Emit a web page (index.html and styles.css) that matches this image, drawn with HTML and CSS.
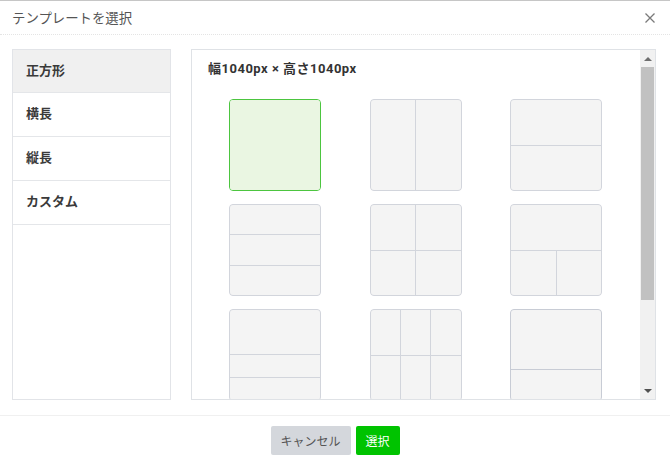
FILE: index.html
```html
<!DOCTYPE html>
<html lang="ja">
<head>
<meta charset="utf-8">
<title>テンプレートを選択</title>
<link rel="stylesheet" href="styles.css">
</head>
<body>
<div class="modal">
  <div class="header">
    <span class="title">テンプレートを選択</span>
    <svg class="close" width="10" height="10" viewBox="0 0 10 10"><path d="M0.5 0.5 L9.5 9.5 M9.5 0.5 L0.5 9.5" stroke="#7a7a7a" stroke-width="1.3" fill="none"/></svg>
  </div>
  <div class="body">
    <ul class="sidebar">
      <li class="item active">正方形</li>
      <li class="item">横長</li>
      <li class="item">縦長</li>
      <li class="item">カスタム</li>
    </ul>
    <div class="panel">
      <div class="content">
        <div class="heading">幅1040px × 高さ1040px</div>
        <div class="grid">
          <div class="tile selected"><div class="cell"></div></div>
          <div class="tile t-2col"><div class="cell"></div><div class="cell"></div></div>
          <div class="tile t-2row"><div class="cell"></div><div class="cell"></div></div>
          <div class="tile t-3row"><div class="cell"></div><div class="cell"></div><div class="cell"></div></div>
          <div class="tile t-2x2"><div class="cell"></div><div class="cell"></div><div class="cell"></div><div class="cell"></div></div>
          <div class="tile t-1-2"><div class="cell span2"></div><div class="cell"></div><div class="cell"></div></div>
          <div class="tile t-211"><div class="cell"></div><div class="cell"></div><div class="cell"></div></div>
          <div class="tile t-3x2"><div class="cell"></div><div class="cell"></div><div class="cell"></div><div class="cell"></div><div class="cell"></div><div class="cell"></div></div>
          <div class="tile t-21 dark"><div class="cell"></div><div class="cell"></div></div>
        </div>
      </div>
      <div class="scrollbar">
        <div class="sb-btn"><span class="arrow up"></span></div>
        <div class="sb-thumb"></div>
        <div class="sb-track"></div>
        <div class="sb-btn"><span class="arrow down"></span></div>
      </div>
    </div>
  </div>
  <div class="footer">
    <button class="btn cancel">キャンセル</button>
    <button class="btn ok">選択</button>
  </div>
</div>
</body>
</html>
```

FILE: styles.css
```css
* { box-sizing: border-box; }
html, body { margin: 0; padding: 0; background: #fff; }
body {
  font-family: Roboto, "Noto Sans CJK JP", sans-serif;
  color: #333;
}
.modal {
  width: 670px;
  height: 462px;
  border-top: 1px solid #c6c6c6;
  display: flex;
  flex-direction: column;
  overflow: hidden;
}
.header {
  height: 34px;
  flex: none;
  display: flex;
  align-items: center;
  justify-content: space-between;
  padding: 0 15px 0 12px;
  border-bottom: 1px dotted #e4e4e4;
}
.title {
  font-size: 13.4px;
  color: #555;
  line-height: 1;
  font-family: "Noto Sans CJK JP", sans-serif;
}
.close { display: block; }
.body {
  flex: none;
  height: 365px;
  display: flex;
  gap: 20px;
  padding: 14px 14px 0 12px;
}
.sidebar {
  list-style: none;
  margin: 0;
  padding: 0;
  width: 159px;
  border: 1px solid #e2e4e8;
  flex: none;
}
.item {
  height: 44px;
  border-bottom: 1px solid #e4e6e9;
  display: flex;
  align-items: center;
  padding: 0 0 4px 13px;
  font-size: 13px;
  font-weight: 700;
  color: #3a3a3a;
  font-family: "Noto Sans CJK JP", sans-serif;
}
.item:first-child { height: 43px; }
.item.active { background: #f0f0f0; }
.panel {
  flex: 1;
  border: 1px solid #dfe2e6;
  display: flex;
  min-width: 0;
}
.content {
  flex: 1;
  overflow: hidden;
  padding: 11px 16px 0;
}
.heading {
  font-size: 13px;
  font-weight: 700;
  line-height: 16px;
  color: #333;
  letter-spacing: 0.5px;
}
.grid {
  margin: 22px 0 0 21px;
  display: grid;
  grid-template-columns: repeat(3, 92px);
  grid-auto-rows: 92px;
  column-gap: 48.5px;
  row-gap: 13px;
}
.tile {
  border: 1px solid #d2d5dc;
  border-radius: 4px;
  background: #d2d5dc;
  overflow: hidden;
  display: grid;
  gap: 1px;
}
.cell { background: #f4f4f4; }
.tile.selected {
  border-color: #4cc53f;
  background: #e9f6e1;
}
.tile.selected .cell { background: #eaf6e2; }
.tile.dark { border-color: #c8ccd5; background: #c8ccd5; }
.t-2col { grid-template-columns: 1fr 1fr; }
.t-2row { grid-template-rows: 1fr 1fr; }
.t-3row { grid-template-rows: 1fr 1fr 1fr; }
.t-2x2 { grid-template-columns: 1fr 1fr; grid-template-rows: 1fr 1fr; }
.t-1-2 { grid-template-columns: 1fr 1fr; grid-template-rows: 1fr 1fr; }
.t-1-2 .span2 { grid-column: span 2; }
.t-211 { grid-template-rows: 2fr 1fr 1fr; }
.t-3x2 { grid-template-columns: 1fr 1fr 1fr; grid-template-rows: 1fr 1fr; }
.t-21 { grid-template-rows: 2fr 1fr; }
.scrollbar {
  width: 15px;
  flex: none;
  background: #f1f1f1;
  display: flex;
  flex-direction: column;
}
.sb-btn {
  height: 17px;
  flex: none;
  display: flex;
  align-items: center;
  justify-content: center;
}
.arrow {
  width: 0;
  height: 0;
  border-left: 4px solid transparent;
  border-right: 4px solid transparent;
}
.arrow.up { border-bottom: 4px solid #6e6e6e; }
.arrow.down { border-top: 4px solid #505050; }
.sb-thumb {
  height: 233px;
  flex: none;
  margin: 0 1px;
  background: #c1c1c1;
}
.sb-track { flex: 1; }
.footer {
  margin-top: 15px;
  border-top: 1px solid #f0f0f0;
  padding-top: 10px;
  display: flex;
  justify-content: center;
  gap: 5px;
}
.btn {
  height: 29px;
  border: none;
  border-radius: 2px;
  padding: 0 10px;
  font-size: 12px;
  font-family: "Noto Sans CJK JP", sans-serif;
  line-height: 29px;
  cursor: pointer;
}
.btn.cancel { background: #d4d7dc; color: #555; width: 80px; }
.btn.ok { background: #00c300; color: #fff; width: 44px; }
```
